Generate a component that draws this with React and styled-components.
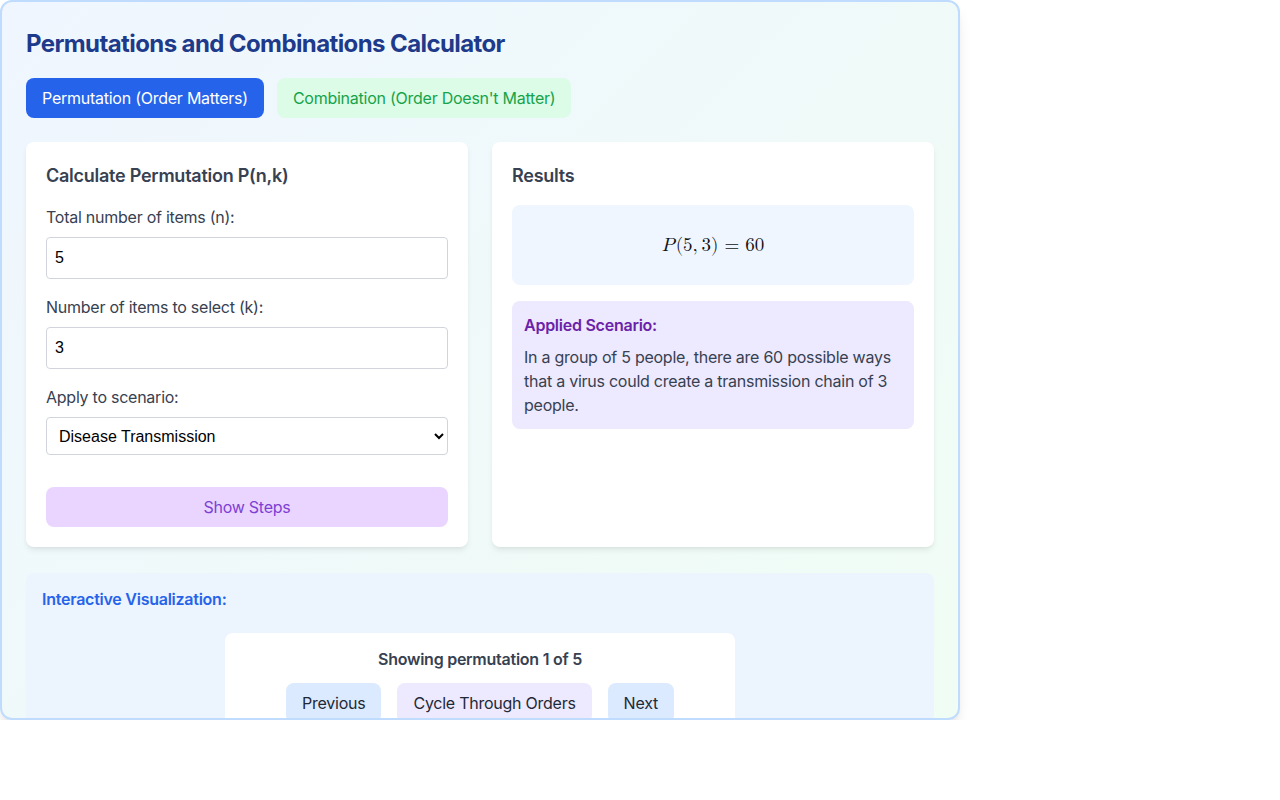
import React, { useState } from "react";
import styled, { createGlobalStyle } from "styled-components";

const GlobalStyle = createGlobalStyle`
  * { box-sizing: border-box; }
  html, body { margin: 0; padding: 0; background: #ffffff; }
  body {
    font-family: Inter, "Noto Sans", "Liberation Sans", sans-serif;
    letter-spacing: -0.25px;
    color: #374151;
  }
`;

const Shell = styled.div`
  width: 960px;
  height: 720px;
  overflow: hidden;
  padding: 24px;
  border: 2px solid #bfdbfe;
  border-radius: 12px;
  background: linear-gradient(135deg, #eff6ff 0%, #f0fdf4 100%);
  box-shadow: 0 10px 15px -3px rgba(0, 0, 0, 0.1), 0 4px 6px -4px rgba(0, 0, 0, 0.1);
`;

const Title = styled.h1`
  margin: 0 0 18px;
  padding-top: 2px;
  font-size: 24px;
  line-height: 32px;
  font-weight: 700;
  letter-spacing: -0.6px;
  color: #1e3a8a;
`;

const ModeBar = styled.div`
  display: flex;
  gap: 13px;
  margin-bottom: 24px;
`;

const ModeButton = styled.button`
  height: 40px;
  padding: 0 16px;
  border: none;
  border-radius: 8px;
  font-family: inherit;
  letter-spacing: inherit;
  font-size: 16px;
  cursor: pointer;
  background: ${(p) => (p.$active ? "#2563eb" : p.$tone)};
  color: ${(p) => (p.$active ? "#ffffff" : p.$text)};
`;

const Columns = styled.div`
  display: grid;
  grid-template-columns: 1fr 1fr;
  gap: 24px;
  margin-bottom: 26px;
`;

const Card = styled.section`
  background: #ffffff;
  border-radius: 8px;
  padding: 20px;
  box-shadow: 0 4px 6px -1px rgba(0, 0, 0, 0.08), 0 2px 4px -2px rgba(0, 0, 0, 0.06);
`;

const CardTitle = styled.h2`
  margin: 0 0 15px;
  font-size: 18px;
  line-height: 28px;
  font-weight: 600;
  color: #374151;
`;

const Field = styled.div`
  margin-bottom: 16px;
`;

const Label = styled.label`
  display: block;
  font-size: 16px;
  line-height: 24px;
  color: #374151;
  margin-bottom: 8px;
`;

const TextInput = styled.input`
  display: block;
  width: 100%;
  height: 42px;
  padding: 8px 12px 8px 8px;
  border: 1px solid #d1d5db;
  border-radius: 4px;
  font-family: "Liberation Sans", Arial, sans-serif;
  font-size: 16px;
  color: #000000;
  background: #ffffff;
`;

const Select = styled.select`
  display: block;
  width: 100%;
  height: 38px;
  padding: 0 8px;
  border: 1px solid #d1d5db;
  border-radius: 4px;
  font-family: "Liberation Sans", Arial, sans-serif;
  font-size: 16px;
  color: #000000;
  background: #ffffff;
`;

const StepsButton = styled.button`
  display: block;
  width: 100%;
  height: 40px;
  margin-top: 32px;
  border: none;
  border-radius: 8px;
  background: #e9d5ff;
  color: #7e3fd4;
  font-family: inherit;
  letter-spacing: inherit;
  font-size: 16px;
  cursor: pointer;
`;

const FormulaBox = styled.div`
  height: 80px;
  display: flex;
  align-items: center;
  justify-content: center;
  border-radius: 8px;
  background: #eff6ff;
  margin-bottom: 16px;
  font-family: "Latin Modern Math", "DejaVu Serif", "Liberation Serif", serif;
  font-size: 19px;
  letter-spacing: 0;
  color: #111111;
`;

const MathVar = styled.span`
  font-style: italic;
  margin-right: 1px;
`;

const MathOp = styled.span`
  margin: 0 6px;
`;

const ScenarioBox = styled.div`
  border-radius: 8px;
  background: #ede9fe;
  padding: 12px;
`;

const ScenarioTitle = styled.h3`
  margin: 0 0 8px;
  font-size: 16px;
  line-height: 24px;
  font-weight: 600;
  color: #6b21a8;
`;

const ScenarioText = styled.p`
  margin: 0;
  font-size: 16px;
  line-height: 24px;
  color: #374151;
`;

const VizSection = styled.section`
  background: #ecf4fe;
  border-radius: 8px;
  padding: 14px 16px 16px;
`;

const VizTitle = styled.h3`
  margin: 0 0 22px;
  font-size: 16px;
  line-height: 24px;
  font-weight: 600;
  color: #2563eb;
`;

const VizCard = styled.div`
  width: 510px;
  margin: 0 auto;
  background: #ffffff;
  border-radius: 8px;
  padding: 14px 16px 16px;
  display: flex;
  flex-direction: column;
  align-items: center;
  gap: 12px;
`;

const VizCaption = styled.div`
  font-size: 16px;
  line-height: 24px;
  font-weight: 600;
  color: #374151;
`;

const VizControls = styled.div`
  display: flex;
  gap: 16px;
`;

const VizButton = styled.button`
  height: 40px;
  padding: 0 16px;
  border: none;
  border-radius: 8px;
  background: ${(p) => p.$bg};
  color: #1f2937;
  font-family: inherit;
  letter-spacing: inherit;
  font-size: 16px;
  cursor: pointer;
`;

export default function App() {
  const [n, setN] = useState("5");
  const [k, setK] = useState("3");
  const [scenario, setScenario] = useState("disease");

  return (
    <>
      <GlobalStyle />
      <Shell>
        <Title>Permutations and Combinations Calculator</Title>
        <ModeBar>
          <ModeButton $active>Permutation (Order Matters)</ModeButton>
          <ModeButton $tone="#dcfce7" $text="#16a34a">
            Combination (Order Doesn't Matter)
          </ModeButton>
        </ModeBar>

        <Columns>
          <Card>
            <CardTitle>Calculate Permutation P(n,k)</CardTitle>
            <Field>
              <Label>Total number of items (n):</Label>
              <TextInput value={n} onChange={(e) => setN(e.target.value)} />
            </Field>
            <Field>
              <Label>Number of items to select (k):</Label>
              <TextInput value={k} onChange={(e) => setK(e.target.value)} />
            </Field>
            <Field>
              <Label>Apply to scenario:</Label>
              <Select value={scenario} onChange={(e) => setScenario(e.target.value)}>
                <option value="disease">Disease Transmission</option>
                <option value="teams">Team Selection</option>
              </Select>
            </Field>
            <StepsButton>Show Steps</StepsButton>
          </Card>

          <Card>
            <CardTitle>Results</CardTitle>
            <FormulaBox>
              <MathVar>P</MathVar>(5,&thinsp;3)<MathOp>=</MathOp>60
            </FormulaBox>
            <ScenarioBox>
              <ScenarioTitle>Applied Scenario:</ScenarioTitle>
              <ScenarioText>
                In a group of 5 people, there are 60 possible ways that a virus could create a
                transmission chain of 3 people.
              </ScenarioText>
            </ScenarioBox>
          </Card>
        </Columns>

        <VizSection>
          <VizTitle>Interactive Visualization:</VizTitle>
          <VizCard>
            <VizCaption>Showing permutation 1 of 5</VizCaption>
            <VizControls>
              <VizButton $bg="#dbeafe">Previous</VizButton>
              <VizButton $bg="#ede9fe">Cycle Through Orders</VizButton>
              <VizButton $bg="#dbeafe">Next</VizButton>
            </VizControls>
          </VizCard>
        </VizSection>
      </Shell>
    </>
  );
}
